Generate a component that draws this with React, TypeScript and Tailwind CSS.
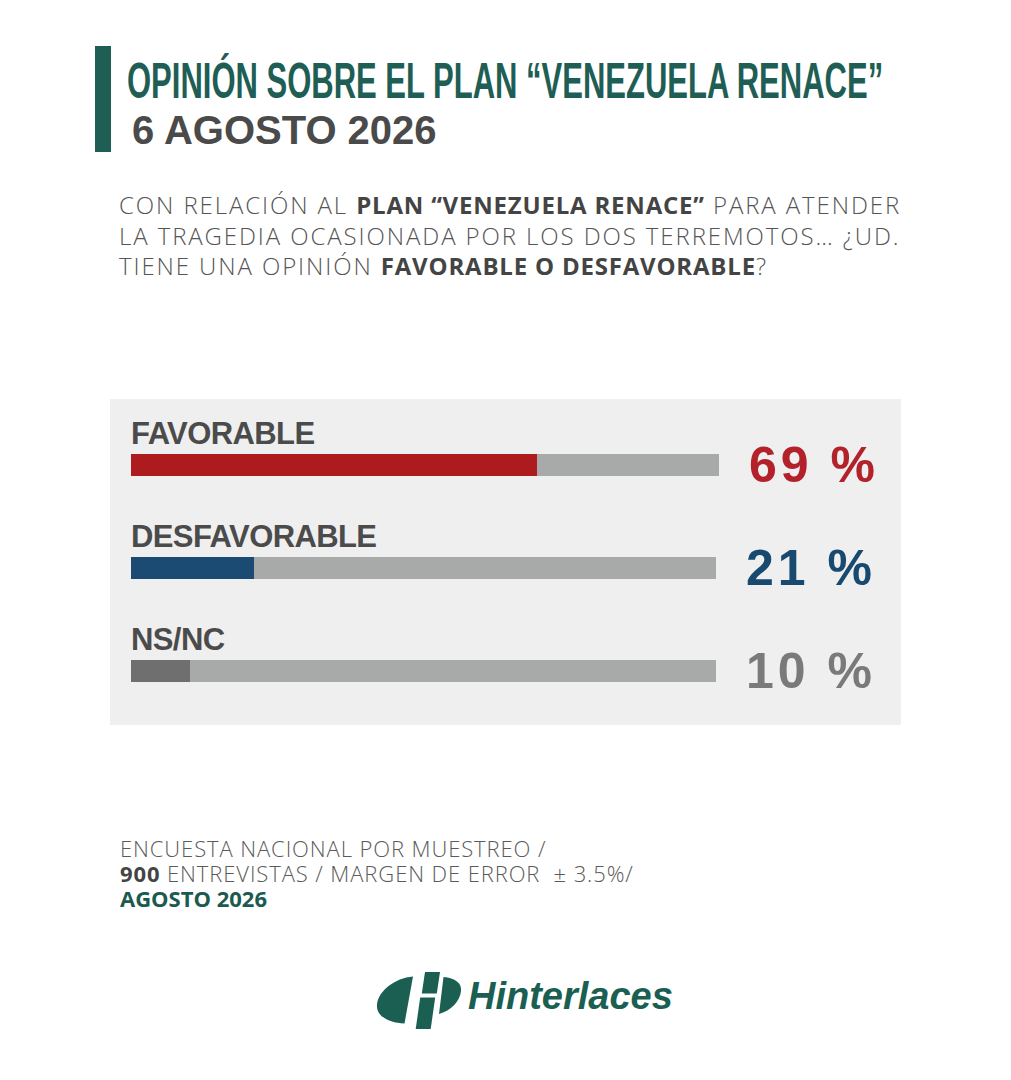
const rows = [
  { label: "FAVORABLE", pct: 69, track: "w-[588px]", fill: "bg-[#ae1b1f]", text: "text-[#b3212a]" },
  { label: "DESFAVORABLE", pct: 21, track: "w-[585px]", fill: "bg-[#1b4a73]", text: "text-[#18496f]" },
  { label: "NS/NC", pct: 10, track: "w-[585px]", fill: "bg-[#6f6f6f]", text: "text-[#7a7a7a]" },
];

function Logo() {
  return (
    <div className="ml-[375px] mt-[58px] flex items-start">
      <svg width="90" height="62" viewBox="0 0 90 62" className="shrink-0">
        <g fill="#1b5e52">
          <path d="M38 7.5 L29.5 54.5 C14 54 1 47 2 36 C3 22 20 9 38 7.5 Z" />
          <path d="M50 3 L65 3 L61.8 24.5 L46.8 24.5 Z" />
          <path d="M45.2 28.5 L60.2 28.5 L55.7 60 L40.7 60 Z" />
          <path d="M68.5 8 C80 9 87 14 86 22 C85 33 75 42 64 45 Z" />
        </g>
      </svg>
      <span className="ml-[3px] mt-[8px] text-[38px] leading-[38px] font-bold italic text-[#1b5e52]">
        Hinterlaces
      </span>
    </div>
  );
}

export default function App() {
  return (
    <div className="w-full min-h-screen bg-white pt-[46px] pb-[40px] font-['Liberation_Sans',Arial,sans-serif]">
      {/* header */}
      <header className="ml-[95px] flex items-start">
        <div className="w-[16px] h-[106px] bg-[#1e5e55] shrink-0" />
        <div className="ml-[16px] pt-[9.5px]">
          <h1 className="w-[770px] whitespace-nowrap text-[50px] leading-[50px] font-bold text-[#1e5e55] scale-x-[0.62] origin-left">
            OPINIÓN SOBRE EL PLAN “VENEZUELA RENACE”
          </h1>
          <p className="mt-[4px] ml-[5px] text-[40px] leading-[40px] font-bold text-[#4a4a4a]">
            6 AGOSTO 2026
          </p>
        </div>
      </header>

      {/* question */}
      <p className="ml-[119px] mt-[38px] font-['Open_Sans',sans-serif] font-light text-[24px] leading-[30.5px] tracking-[1.9px] text-[#555555] whitespace-nowrap">
        CON RELACIÓN AL <b className="font-bold text-[#444444] tracking-[0.8px]">PLAN “VENEZUELA RENACE”</b> PARA ATENDER
        <br />
        LA TRAGEDIA OCASIONADA POR LOS DOS TERREMOTOS… ¿UD.
        <br />
        TIENE UNA OPINIÓN <b className="font-bold text-[#444444] tracking-[0.8px]">FAVORABLE O DESFAVORABLE</b>?
      </p>

      {/* chart */}
      <section className="ml-[110px] mt-[117px] w-[791px] bg-[#efefef] pl-[21px] pt-[20px] pb-[43px]">
        {rows.map((r, i) => (
          <div key={r.label} className={i > 0 ? "mt-[46px]" : ""}>
            <div className="text-[31px] leading-[30px] font-bold tracking-[-0.6px] text-[#4b4b4b]">{r.label}</div>
            <div className="mt-[5px] flex items-center h-[22px]">
              <div className={`${r.track} h-[22px] bg-[#a8aaaa] shrink-0`}>
                <div className={`h-full ${r.fill}`} style={{ width: `${r.pct}%` }} />
              </div>
              <span className={`ml-[30px] text-[50px] leading-[22px] font-bold tracking-[4px] whitespace-nowrap ${r.text}`}>
                {r.pct} %
              </span>
            </div>
          </div>
        ))}
      </section>

      {/* footnote */}
      <div className="ml-[120px] mt-[111px] font-['Open_Sans',sans-serif] font-light text-[22px] leading-[25px] tracking-[0.9px] text-[#5a5a5a]">
        <p>ENCUESTA NACIONAL POR MUESTREO /</p>
        <p>
          <b className="font-bold text-[#444444]">900</b> ENTREVISTAS / MARGEN DE ERROR&nbsp; ± 3.5%/
        </p>
        <p className="font-bold text-[#1b5a4e] tracking-normal">AGOSTO 2026</p>
      </div>

      <Logo />
    </div>
  );
}
